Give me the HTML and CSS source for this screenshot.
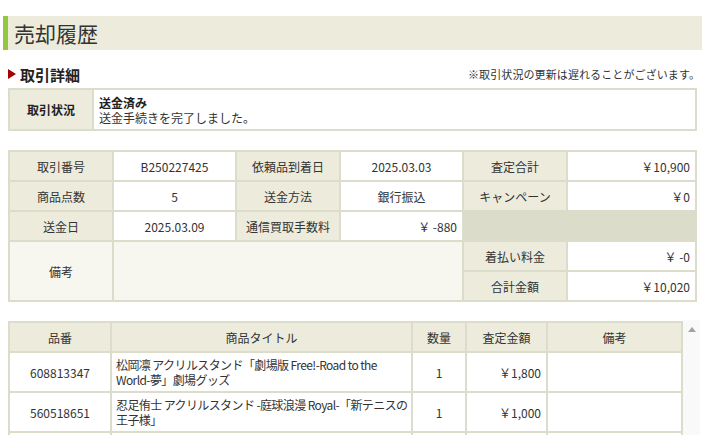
FILE: index.html
```html
<!DOCTYPE html>
<html lang="ja">
<head>
    <meta charset="UTF-8">
    <meta name="viewport" content="width=device-width, initial-scale=1.0">
    <title>売却履歴</title>
    <link rel="stylesheet" href="styles.css">
</head>
<body>

    <h1 class="page-title">売却履歴</h1>

    <div class="content">
        <div class="section-head">
            <h2><span class="mark"></span>取引詳細</h2>
            <p class="note">※取引状況の更新は遅れることがございます。</p>
        </div>

        <table class="grid status">
            <colgroup>
                <col style="width: 82px">
                <col>
            </colgroup>
            <tr>
                <th>取引状況</th>
                <td class="status-text">
                    <div class="status-name">送金済み</div>
                    <div>送金手続きを完了しました。</div>
                </td>
            </tr>
        </table>

        <table class="grid summary">
            <colgroup>
                <col style="width: 102px">
                <col style="width: 121px">
                <col style="width: 102px">
                <col style="width: 121px">
                <col style="width: 102px">
                <col>
            </colgroup>
            <tr>
                <th>取引番号</th>
                <td>B250227425</td>
                <th>依頼品到着日</th>
                <td>2025.03.03</td>
                <th>査定合計</th>
                <td class="price">￥10,900</td>
            </tr>
            <tr>
                <th>商品点数</th>
                <td>5</td>
                <th>送金方法</th>
                <td>銀行振込</td>
                <th>キャンペーン</th>
                <td class="price">￥0</td>
            </tr>
            <tr>
                <th>送金日</th>
                <td>2025.03.09</td>
                <th>通信買取手数料</th>
                <td class="price">￥ -880</td>
                <td class="blank" colspan="2"></td>
            </tr>
            <tr>
                <th class="memo" rowspan="2">備考</th>
                <td class="memo" rowspan="2" colspan="3"></td>
                <th>着払い料金</th>
                <td class="price">￥ -0</td>
            </tr>
            <tr>
                <th>合計金額</th>
                <td class="price">￥10,020</td>
            </tr>
        </table>

        <div class="items-wrap">
            <div class="items-scroll">
                <table class="grid items">
                    <colgroup>
                        <col style="width: 100px">
                        <col style="width: 299px">
                        <col style="width: 52px">
                        <col style="width: 79px">
                        <col>
                    </colgroup>
                    <tr>
                        <th>品番</th>
                        <th>商品タイトル</th>
                        <th>数量</th>
                        <th>査定金額</th>
                        <th>備考</th>
                    </tr>
                    <tr>
                        <td>608813347</td>
                        <td class="title">松岡凛 アクリルスタンド「劇場版 Free!-Road to the World-夢」劇場グッズ</td>
                        <td>1</td>
                        <td class="price">￥1,800</td>
                        <td></td>
                    </tr>
                    <tr>
                        <td>560518651</td>
                        <td class="title">忍足侑士 アクリルスタンド -庭球浪漫 Royal-「新テニスの王子様」</td>
                        <td>1</td>
                        <td class="price">￥1,000</td>
                        <td></td>
                    </tr>
                    <tr class="next">
                        <td></td>
                        <td></td>
                        <td></td>
                        <td></td>
                        <td></td>
                    </tr>
                </table>
            </div>
            <div class="rail"><span class="rail-up"></span></div>
        </div>
    </div>

</body>
</html>
```

FILE: styles.css
```css
body {
    margin: 0;
    padding-top: 16px;
    font-family: "Noto Sans CJK JP", "Noto Sans", sans-serif;
    font-size: 12px;
    color: #333;
    background: #fff;
    overflow: hidden;
}

.page-title {
    margin: 0 0 0 3px;
    height: 34px;
    line-height: 34px;
    padding-left: 6px;
    border-left: 5px solid #94c73d;
    background: #ecebdc;
    font-size: 21px;
    font-weight: normal;
    color: #333;
}

.content {
    padding: 0 5px 0 8px;
}

.section-head {
    display: flex;
    justify-content: space-between;
    height: 24px;
    margin-top: 14px;
}

.section-head h2 {
    display: flex;
    align-items: center;
    margin: 0;
    height: 20px;
    font-size: 15px;
    font-weight: bold;
    color: #222;
}

.mark {
    width: 0;
    height: 0;
    margin-right: 4px;
    border-top: 5px solid transparent;
    border-bottom: 5px solid transparent;
    border-left: 8px solid #a50000;
}

.note {
    align-self: flex-end;
    margin: 0 -3px 7px 0;
    font-size: 11px;
    line-height: 14px;
    letter-spacing: 0.1px;
    color: #333;
}

/* shared table look: beige frame drawn by the spacing */
.grid {
    table-layout: fixed;
    border-collapse: separate;
    border-spacing: 2px;
    background: #dcdcca;
}

.grid th,
.grid td {
    padding: 0 5px;
    font-weight: normal;
    text-align: center;
    vertical-align: middle;
    background: #fff;
    line-height: 15px;
    white-space: nowrap;
    overflow: hidden;
}

.grid th {
    background: #ecebdc;
}

.status {
    width: 689px;
    height: 43px;
}

.status th {
    font-weight: bold;
    color: #222;
}

.status .status-text {
    text-align: left;
    line-height: 15px;
    height: 39px;
}

.status-name {
    font-weight: bold;
    color: #222;
}

.summary {
    width: 689px;
    margin-top: 19px;
}

.summary th,
.summary td {
    height: 28px;
}

.grid .price {
    text-align: right;
}

.grid .blank {
    background: transparent;
}

.grid .memo {
    background: #f7f7ef;
}

.items-wrap {
    display: flex;
    align-items: flex-start;
    margin-top: 18px;
    margin-right: -5px;
    height: 115px;
    overflow: hidden;
}

.items-scroll {
    width: 675px;
    padding-top: 1px;
}

.items {
    width: 675px;
}

.items th {
    height: 28px;
}

.items td {
    height: 30px;
    padding: 4px 5px;
}

.items .title {
    text-align: left;
    white-space: normal;
    padding: 4px 2px 4px 4px;
    letter-spacing: -0.6px;
}

.rail {
    width: 17px;
    height: 115px;
    background: #f9f9f9;
    display: flex;
    justify-content: center;
    padding-top: 7px;
    box-sizing: border-box;
}

.rail-up {
    width: 0;
    height: 0;
    border-left: 4px solid transparent;
    border-right: 4px solid transparent;
    border-bottom: 5px solid #a3a3a3;
}
```
